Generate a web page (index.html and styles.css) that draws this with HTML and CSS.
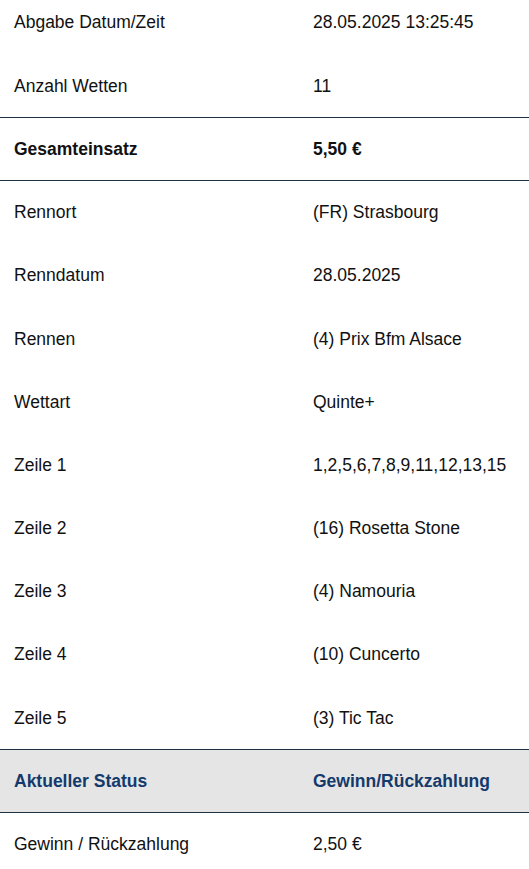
FILE: index.html
```html
<!DOCTYPE html>
<html lang="de">
<head>
<meta charset="utf-8">
<link rel="stylesheet" href="styles.css">
</head>
<body>
<table class="details">
  <colgroup><col class="col-label"><col class="col-value"></colgroup>
  <tbody>
    <tr class="row"><td class="label">Abgabe Datum/Zeit</td><td class="value">28.05.2025 13:25:45</td></tr>
    <tr class="row line"><td class="label">Anzahl Wetten</td><td class="value">11</td></tr>
    <tr class="row line total"><td class="label">Gesamteinsatz</td><td class="value">5,50 €</td></tr>
    <tr class="row"><td class="label">Rennort</td><td class="value">(FR) Strasbourg</td></tr>
    <tr class="row"><td class="label">Renndatum</td><td class="value">28.05.2025</td></tr>
    <tr class="row"><td class="label">Rennen</td><td class="value">(4) Prix Bfm Alsace</td></tr>
    <tr class="row"><td class="label">Wettart</td><td class="value">Quinte+</td></tr>
    <tr class="row"><td class="label">Zeile 1</td><td class="value">1,2,5,6,7,8,9,11,12,13,15</td></tr>
    <tr class="row"><td class="label">Zeile 2</td><td class="value">(16) Rosetta Stone</td></tr>
    <tr class="row"><td class="label">Zeile 3</td><td class="value">(4) Namouria</td></tr>
    <tr class="row"><td class="label">Zeile 4</td><td class="value">(10) Cuncerto</td></tr>
    <tr class="row line"><td class="label">Zeile 5</td><td class="value">(3) Tic Tac</td></tr>
    <tr class="row line status"><td class="label">Aktueller Status</td><td class="value">Gewinn/Rückzahlung</td></tr>
    <tr class="row"><td class="label">Gewinn / Rückzahlung</td><td class="value">2,50 €</td></tr>
  </tbody>
</table>
</body>
</html>
```
FILE: styles.css
```css
html, body {
  margin: 0;
  padding: 0;
  background: #ffffff;
}
body {
  font-family: "Liberation Sans", Arial, sans-serif;
  font-size: 17.5px;
  color: #111111;
}
.details {
  width: 100%;
  table-layout: fixed;
  border-collapse: collapse;
  margin-top: -9px;
}
.col-label {
  width: 313px;
}
.row td {
  height: 63.2px;
  padding: 0 0 0 14px;
  vertical-align: middle;
  line-height: 20px;
  box-sizing: border-box;
  border-bottom: 1px solid transparent;
  white-space: nowrap;
}
.row td.value {
  padding-left: 0;
}
.row.line td {
  border-bottom: 1px solid #1c3042;
}
.total td {
  font-weight: bold;
}
.status td {
  background: #e5e5e5;
  color: #143a6b;
  font-weight: bold;
}
```
